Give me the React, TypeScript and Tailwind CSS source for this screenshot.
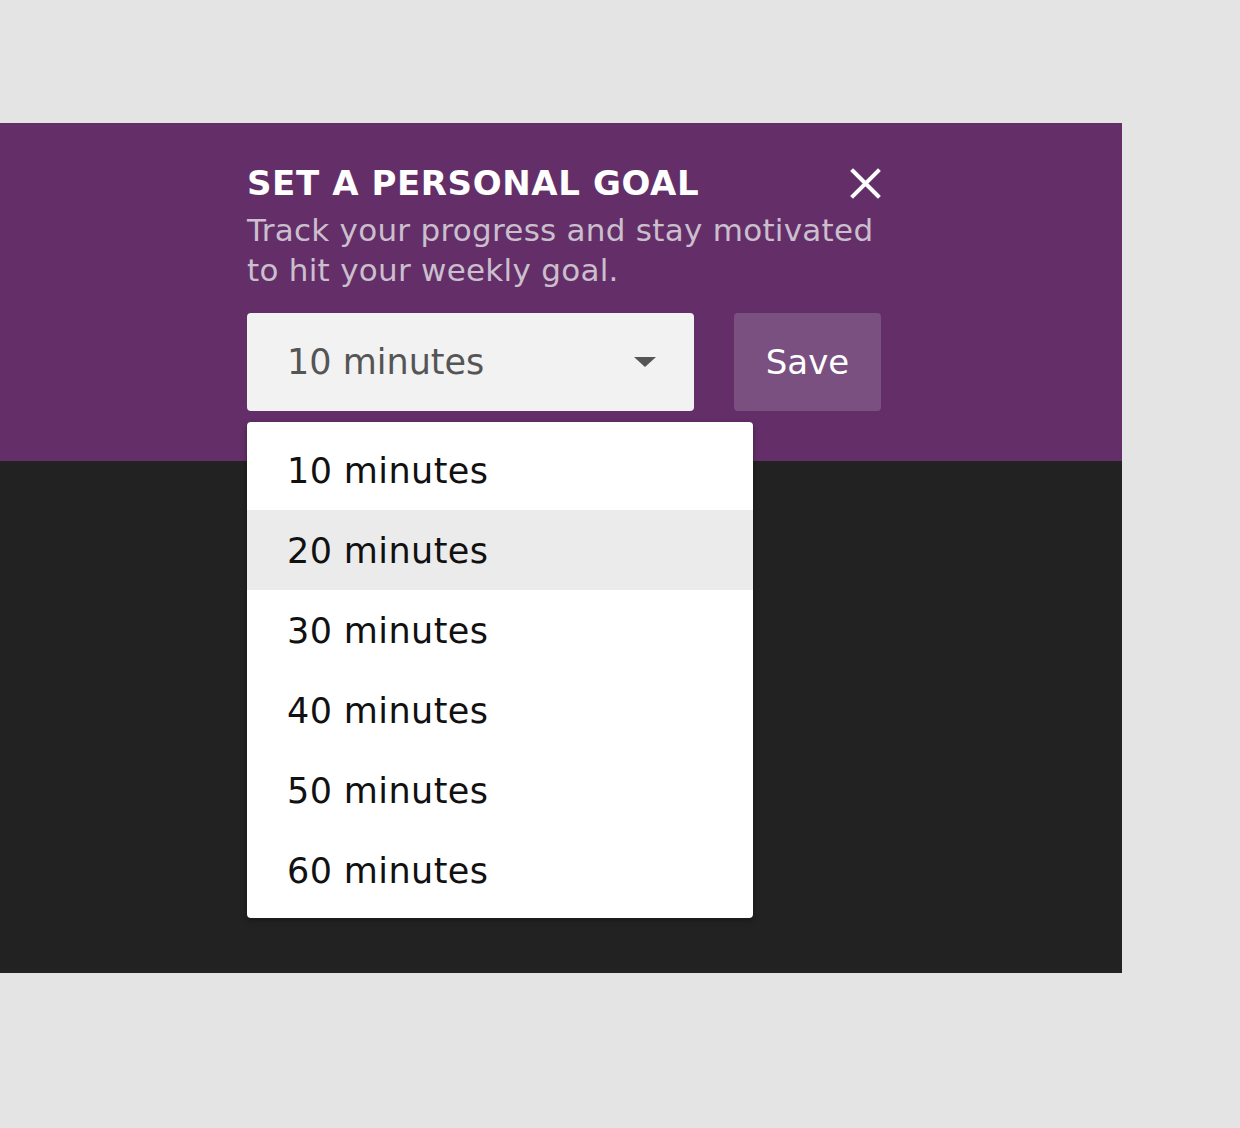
import React from 'react';

const options = ['10 minutes', '20 minutes', '30 minutes', '40 minutes', '50 minutes', '60 minutes'];

export default function App() {
  return (
    <div className="min-h-[1128px] w-[1240px] bg-[#e4e4e4] pt-[123px] font-['DejaVu_Sans',sans-serif]">
      <div className="w-[1122px]">
        <div className="relative h-[338px] bg-[#642f69] pl-[247px] pt-[38px]">
          <div className="w-[660px]">
            <div className="flex w-[634px] items-center justify-between">
              <h1 className="text-[34px] font-bold leading-[44px] tracking-[0.6px] text-white">SET A PERSONAL GOAL</h1>
              <svg width="31" height="31" viewBox="0 0 31 31">
                <path d="M3 3L28 28M28 3L3 28" stroke="white" strokeWidth="4" strokeLinecap="square" />
              </svg>
            </div>
            <p className="mt-[5px] text-[31px] leading-[40px] tracking-[0.27px] text-[#cbbfcd]">
              Track your progress and stay motivated
              <br />
              to hit your weekly goal.
            </p>
          </div>
          <div className="mt-[23px] flex gap-[40px]">
            <div className="flex h-[98px] w-[447px] items-center justify-between rounded-[4px] bg-[#f2f2f2] pl-[40px] pr-[38px]">
              <span className="text-[35px] text-[#555555]">10 minutes</span>
              <svg width="22" height="10" viewBox="0 0 22 10">
                <path d="M0 0H22L11 10Z" fill="#555555" />
              </svg>
            </div>
            <button className="h-[98px] w-[147px] rounded-[4px] bg-[#7a5080] text-[34px] text-white">Save</button>
          </div>
          <div className="absolute left-[247px] top-[299px] z-10 w-[506px] rounded-[4px] bg-white py-[8px] shadow-[0_2px_6px_rgba(0,0,0,0.35)]">
            {options.map((o, i) => (
              <div
                key={o}
                className={i === 1 ? 'flex h-[80px] items-center bg-[#ebebeb] pl-[40px] pt-[3px] text-[35px] tracking-[0.4px] text-[#111111]' : 'flex h-[80px] items-center pl-[40px] pt-[3px] text-[35px] tracking-[0.4px] text-[#111111]'}
              >
                {o}
              </div>
            ))}
          </div>
        </div>
        <div className="h-[512px] bg-[#222222]" />
      </div>
    </div>
  );
}
